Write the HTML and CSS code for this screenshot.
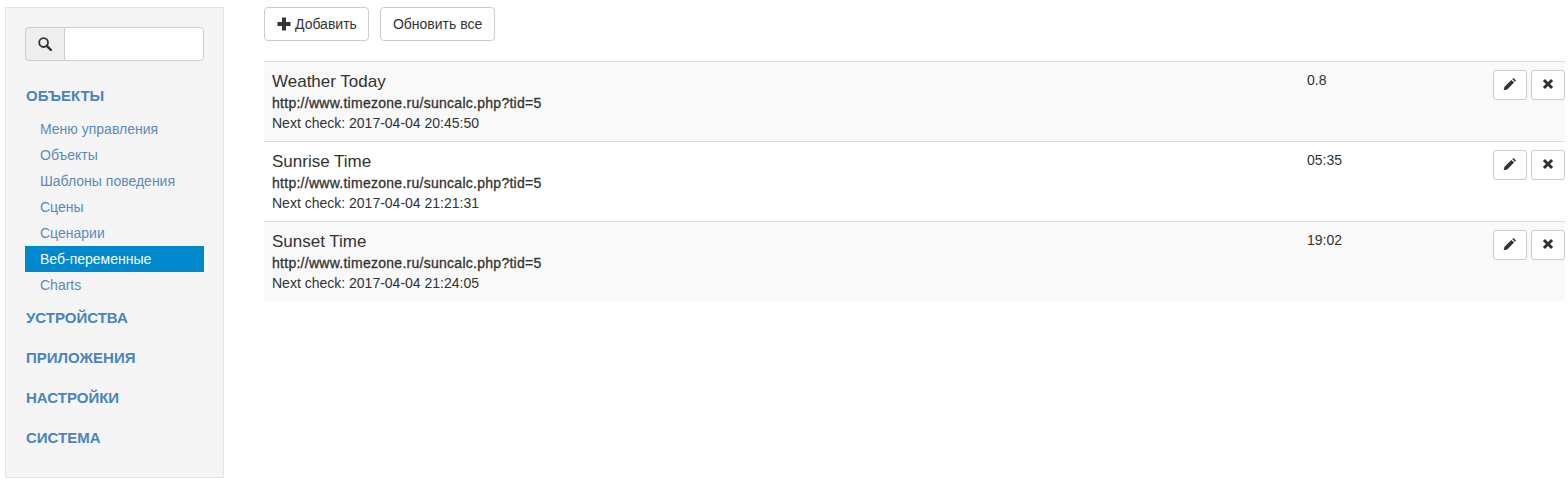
FILE: index.html

```html
<!DOCTYPE html>
<html lang="ru">
<head>
<meta charset="UTF-8" />
<title>Веб-переменные</title>
<link rel="stylesheet" href="styles.css">
</head>
<body>
<div class="page">
  <div class="sidebar">
    <div class="search">
      <span class="search-addon">
        <svg class="icon" viewBox="0 0 14 14" aria-hidden="true"><circle cx="5.6" cy="5.6" r="4.4" fill="none" stroke="#333" stroke-width="1.8"/><path d="M8.8 8.8l4 4" stroke="#333" stroke-width="2.4" stroke-linecap="round"/></svg>
      </span>
      <input class="search-input" type="text">
    </div>
    <ul class="menu">
      <li class="menu-head first">ОБЪЕКТЫ</li>
      <li class="submenu">
        <a href="#">Меню управления</a>
        <a href="#">Объекты</a>
        <a href="#">Шаблоны поведения</a>
        <a href="#">Сцены</a>
        <a href="#">Сценарии</a>
        <a href="#" class="active">Веб-переменные</a>
        <a href="#">Charts</a>
      </li>
      <li class="menu-head">УСТРОЙСТВА</li>
      <li class="menu-head">ПРИЛОЖЕНИЯ</li>
      <li class="menu-head">НАСТРОЙКИ</li>
      <li class="menu-head">СИСТЕМА</li>
    </ul>
  </div>

  <div class="content">
    <div class="toolbar">
      <a href="#" class="btn btn-add">
        <svg class="icon" viewBox="0 0 14 14" aria-hidden="true"><path d="M5 .5h4v4.5h4.5v4H9v4.5H5V9H.5V5H5z" fill="#333"/></svg>
        Добавить
      </a>
      <a href="#" class="btn">Обновить все</a>
    </div>

    <div class="rows">
      <div class="row">
        <div class="info">
          <div class="title">Weather Today</div>
          <div class="url">http://www.timezone.ru/suncalc.php?tid=5</div>
          <div class="check">Next check: 2017-04-04 20:45:50</div>
        </div>
        <div class="value">0.8</div>
        <div class="actions">
          <a href="#" class="btn-sm"><svg class="icon-edit" viewBox="0 0 12 12" aria-hidden="true"><path d="M.6 11.4l.7-3 5.9-5.9 2.3 2.3-5.9 5.9zM7.9 1.8l1-1 2.3 2.3-1 1z" fill="#333"/></svg></a>
          <a href="#" class="btn-sm"><svg class="icon-sm" viewBox="0 0 12 12" aria-hidden="true"><path d="M3 .9L6 3.9 9 .9 11.1 3 8.1 6l3 3L9 11.1l-3-3-3 3L.9 9l3-3-3-3z" fill="#333"/></svg></a>
        </div>
      </div>
      <div class="row">
        <div class="info">
          <div class="title">Sunrise Time</div>
          <div class="url">http://www.timezone.ru/suncalc.php?tid=5</div>
          <div class="check">Next check: 2017-04-04 21:21:31</div>
        </div>
        <div class="value">05:35</div>
        <div class="actions">
          <a href="#" class="btn-sm"><svg class="icon-edit" viewBox="0 0 12 12" aria-hidden="true"><path d="M.6 11.4l.7-3 5.9-5.9 2.3 2.3-5.9 5.9zM7.9 1.8l1-1 2.3 2.3-1 1z" fill="#333"/></svg></a>
          <a href="#" class="btn-sm"><svg class="icon-sm" viewBox="0 0 12 12" aria-hidden="true"><path d="M3 .9L6 3.9 9 .9 11.1 3 8.1 6l3 3L9 11.1l-3-3-3 3L.9 9l3-3-3-3z" fill="#333"/></svg></a>
        </div>
      </div>
      <div class="row">
        <div class="info">
          <div class="title">Sunset Time</div>
          <div class="url">http://www.timezone.ru/suncalc.php?tid=5</div>
          <div class="check">Next check: 2017-04-04 21:24:05</div>
        </div>
        <div class="value">19:02</div>
        <div class="actions">
          <a href="#" class="btn-sm"><svg class="icon-edit" viewBox="0 0 12 12" aria-hidden="true"><path d="M.6 11.4l.7-3 5.9-5.9 2.3 2.3-5.9 5.9zM7.9 1.8l1-1 2.3 2.3-1 1z" fill="#333"/></svg></a>
          <a href="#" class="btn-sm"><svg class="icon-sm" viewBox="0 0 12 12" aria-hidden="true"><path d="M3 .9L6 3.9 9 .9 11.1 3 8.1 6l3 3L9 11.1l-3-3-3 3L.9 9l3-3-3-3z" fill="#333"/></svg></a>
        </div>
      </div>
    </div>
  </div>
</div>
</body>
</html>
```

FILE: styles.css

```css
body {
  margin: 0;
  background: #fff;
  font-family: "Liberation Sans", Arial, sans-serif;
  font-size: 14px;
  line-height: 20px;
  color: #333;
}

a {
  text-decoration: none;
}

.page {
  display: flex;
  align-items: flex-start;
  padding: 7px 3px 0 5px;
}

.sidebar {
  box-sizing: border-box;
  flex: 0 0 219px;
  min-width: 0;
  height: 471px;
  margin-right: 40px;
  padding: 19px 19px 0;
  background: #f5f5f5;
  border: 1px solid #e3e3e3;
}

.search {
  display: flex;
  height: 34px;
}
.search-addon {
  box-sizing: border-box;
  width: 39px;
  display: flex;
  align-items: center;
  justify-content: center;
  background: #eee;
  border: 1px solid #ccc;
  border-right: 0;
  border-radius: 4px 0 0 4px;
}
.search-input {
  box-sizing: border-box;
  flex: 1;
  width: 0;
  background: #fff;
  border: 1px solid #ccc;
  border-radius: 0 4px 4px 0;
}

.icon {
  width: 14px;
  height: 14px;
}
.icon-sm {
  width: 12px;
  height: 12px;
}
.icon-edit {
  width: 14px;
  height: 14px;
}

.menu {
  list-style: none;
  margin: 0;
  padding: 0;
}
.menu-head {
  height: 39px;
  padding: 1px 0 0 1px;
  font-size: 15px;
  font-weight: bold;
  line-height: 40px;
  color: #4a84bf;
}
.menu-head.first {
  margin-top: 14px;
  height: 40px;
}
.submenu {
  display: flex;
  flex-direction: column;
  margin-bottom: -1px;
}
.submenu a {
  height: 26px;
  padding-left: 15px;
  line-height: 26px;
  color: #5a8bbd;
}
.submenu a.active {
  background: #0088cc;
  color: #fff;
}

.content {
  flex: 1;
  min-width: 0;
}

.toolbar {
  display: flex;
  gap: 11px;
  height: 54px;
}
.btn {
  box-sizing: border-box;
  height: 34px;
  padding: 6px 12px;
  display: flex;
  align-items: center;
  gap: 4px;
  background: #fff;
  border: 1px solid #ccc;
  border-radius: 4px;
  color: #333;
}
.btn-add {
  padding-right: 11px;
}

.row {
  box-sizing: border-box;
  height: 80px;
  display: flex;
  padding: 7px 0 0 8px;
  border-top: 1px solid #ddd;
}
.row:nth-child(odd) {
  background: #f9f9f9;
}

.info {
  width: 1035px;
}
.title {
  padding-top: 1px;
  margin-bottom: -1px;
  font-size: 17px;
  line-height: 24px;
}
.url {
  letter-spacing: 0.27px;
  -webkit-text-stroke: 0.3px #333;
}
.value {
  flex: 1;
  padding-top: 1px;
}
.actions {
  display: flex;
  gap: 4px;
  margin-top: 1px;
}
.btn-sm {
  box-sizing: border-box;
  width: 34px;
  height: 30px;
  padding-bottom: 2px;
  display: flex;
  align-items: center;
  justify-content: center;
  background: #fff;
  border: 1px solid #ccc;
  border-radius: 3px;
}
```
